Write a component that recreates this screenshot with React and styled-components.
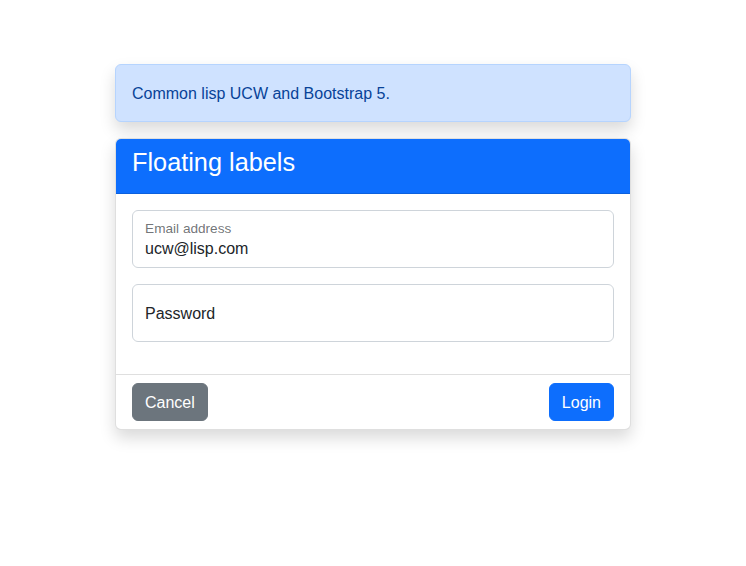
import React from "react";
import styled, { createGlobalStyle } from "styled-components";

const GlobalStyle = createGlobalStyle`
  body {
    margin: 0;
    background: #fff;
    font-family: "Liberation Sans", Arial, sans-serif;
    font-size: 16px;
    line-height: 1.5;
    color: #212529;
  }
  * {
    box-sizing: border-box;
  }
`;

const Page = styled.div`
  min-height: 100vh;
  padding: 64px 0 40px 0;
`;

const Container = styled.div`
  width: 540px;
  margin: 0 auto;
  padding: 0 12px;
`;

const Alert = styled.div`
  padding: 17px 16px 15px 16px;
  margin-bottom: 16px;
  background: #cfe2ff;
  border: 1px solid #b6d4fe;
  border-radius: 6px;
  color: #084298;
  box-shadow: 0 8px 16px rgba(0, 0, 0, 0.15);
`;

const Card = styled.div`
  background: #fff;
  border: 1px solid rgba(0, 0, 0, 0.125);
  border-radius: 6px;
  box-shadow: 0 8px 16px rgba(0, 0, 0, 0.15);
  overflow: hidden;
`;

const CardHeader = styled.div`
  background: #0d6efd;
  color: #fff;
  padding: 8px 16px;
  border-bottom: 1px solid rgba(0, 0, 0, 0.125);
  h3 {
    margin: 0 0 8px 0;
    font-size: 25.3px;
    font-weight: 500;
    line-height: 1.2;
  }
`;

const CardBody = styled.div`
  padding: 16px;
`;

const Floating = styled.div`
  position: relative;
  margin-bottom: 16px;
`;

const Input = styled.input`
  display: block;
  width: 100%;
  height: 58px;
  padding: ${(p) => (p.$filled ? "28px 12px 8px" : "17px 12px 15px")};
  font-family: inherit;
  font-size: 16px;
  line-height: 24px;
  color: #212529;
  background: #fff;
  border: 1px solid #ced4da;
  border-radius: 6px;
  outline: none;
  &::placeholder {
    color: transparent;
  }
`;

const Label = styled.label`
  position: absolute;
  top: 0;
  left: 0;
  height: 100%;
  padding: 17px 12px 15px 12px;
  border: 1px solid transparent;
  pointer-events: none;
  transform-origin: 0 0;
  white-space: nowrap;
  color: ${(p) => (p.$floated ? "rgba(33, 37, 41, 0.65)" : "#212529")};
  transform: ${(p) =>
    p.$floated ? "scale(0.85) translateY(-8px) translateX(2.4px)" : "none"};
`;

const CardFooter = styled.div`
  display: flex;
  justify-content: space-between;
  align-items: center;
  padding: 8px 16px;
  border-top: 1px solid rgba(0, 0, 0, 0.125);
`;

const Button = styled.button`
  font-family: inherit;
  font-size: 16px;
  line-height: 24px;
  padding: 7px 12px 5px 12px;
  border-radius: 6px;
  border: 1px solid ${(p) => (p.$primary ? "#0d6efd" : "#6c757d")};
  background: ${(p) => (p.$primary ? "#0d6efd" : "#6c757d")};
  color: #fff;
  cursor: pointer;
`;

export default function App() {
  return (
    <Page>
      <GlobalStyle />
      <Container>
        <Alert>Common lisp UCW and Bootstrap 5.</Alert>
        <Card>
          <CardHeader>
            <h3>Floating labels</h3>
          </CardHeader>
          <CardBody>
            <Floating>
              <Input
                $filled
                type="email"
                defaultValue="ucw@lisp.com"
                placeholder="name@example.com"
              />
              <Label $floated>Email address</Label>
            </Floating>
            <Floating>
              <Input type="password" placeholder="Password" />
              <Label>Password</Label>
            </Floating>
          </CardBody>
          <CardFooter>
            <Button>Cancel</Button>
            <Button $primary>Login</Button>
          </CardFooter>
        </Card>
      </Container>
    </Page>
  );
}
